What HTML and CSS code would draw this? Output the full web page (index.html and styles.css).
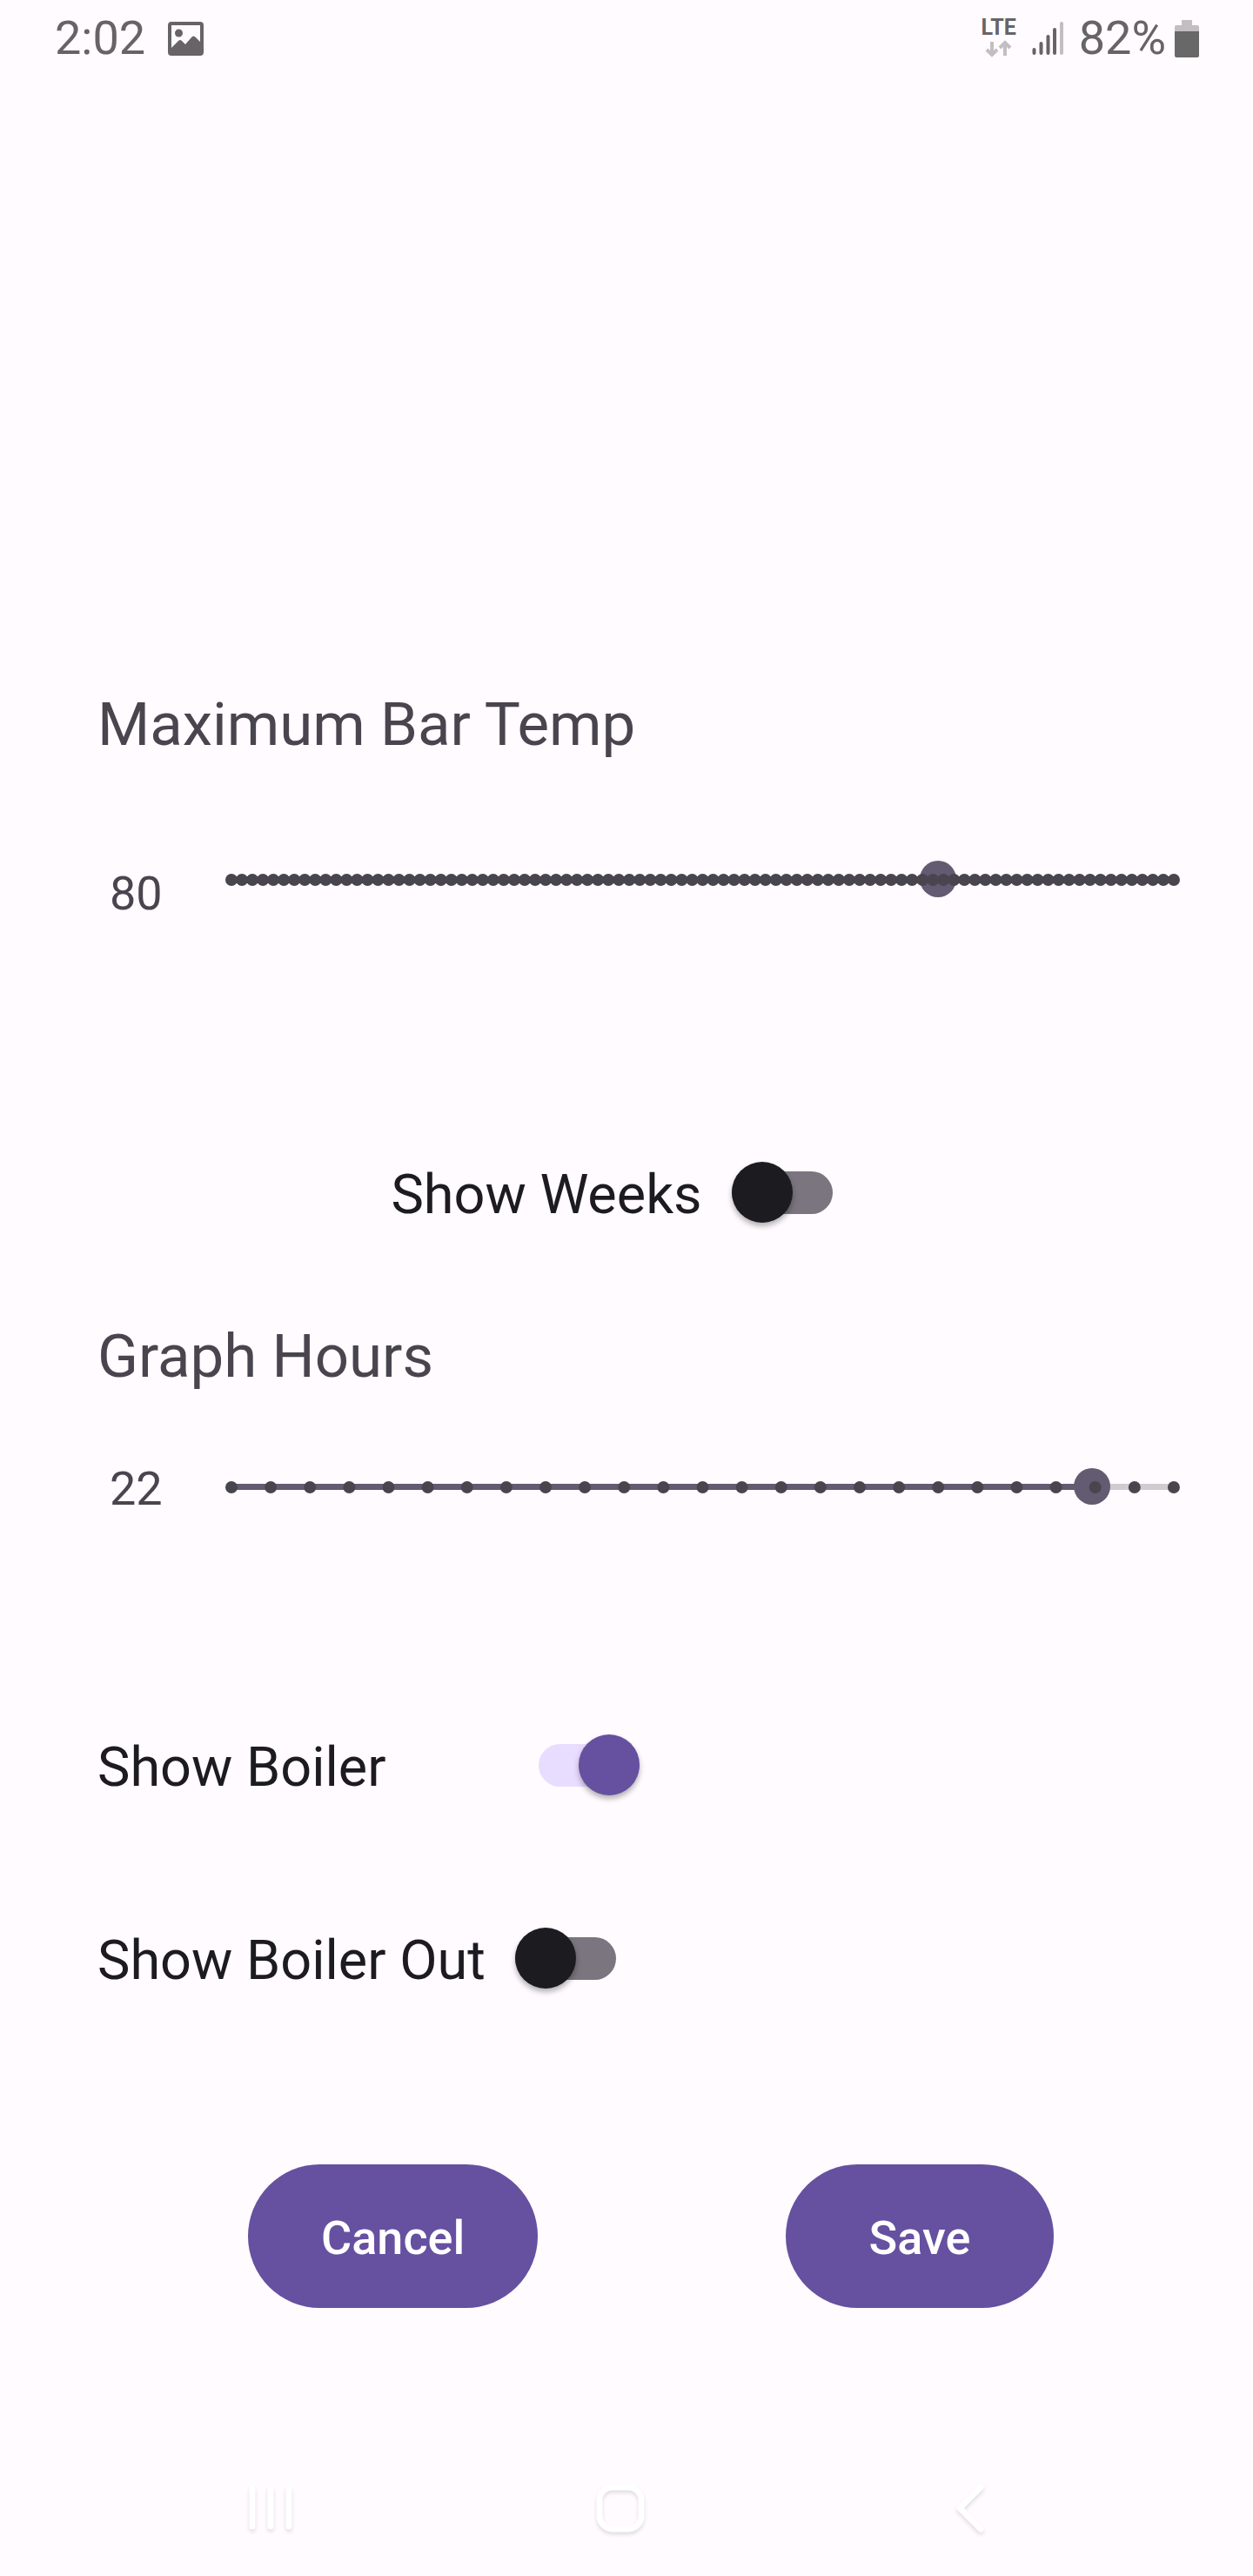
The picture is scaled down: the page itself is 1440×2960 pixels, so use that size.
FILE: index.html
```html
<!DOCTYPE html>
<html lang="en">
<head>
<meta charset="utf-8">
<meta name="viewport" content="width=device-width, initial-scale=1">
<title>Graph settings</title>
<link rel="stylesheet" href="styles.css">
</head>
<body>
<header class="status">
  <div class="status-group">
    <time class="clock">2:02</time>
    <svg class="picture-icon" viewBox="0 0 41 39" role="img" aria-label="Screenshot saved">
      <path fill-rule="evenodd" d="M4 0H37Q41 0 41 4V35Q41 39 37 39H4Q0 39 0 35V4Q0 0 4 0ZM4 4V30L12 22Q14 20 16 22L20 26L27 18Q29 15 32 18L37 23V4Z"/>
      <circle cx="12.500" cy="13" r="4.500"/>
    </svg>
  </div>
  <div class="status-group status-right">
    <div class="network">
      <span class="network-type">LTE</span>
      <svg class="network-arrows" viewBox="0 0 31 20" aria-hidden="true">
        <path d="M8 2V16M2 11L8 17L14 11M23 18V4M17 9L23 3L29 9"/>
      </svg>
    </div>
    <svg class="signal" viewBox="0 0 36 40" role="img" aria-label="Signal four of five">
      <path d="M2.500 33V37M10.500 26V37M18.500 18V37M26 10V37"/>
      <path class="faint" d="M34 3V37"/>
    </svg>
    <div class="power">
      <span class="clock">82%</span>
      <svg class="battery" viewBox="0 0 28 43" aria-hidden="true">
        <path class="battery-empty" d="M8 0H20V6H26Q28 6 28 8V13H0V8Q0 6 2 6H8Z"/>
        <path class="battery-full" d="M0 13H28V41Q28 43 26 43H2Q0 43 0 41Z"/>
      </svg>
    </div>
  </div>
</header>

<main class="settings">
  <section class="setting">
    <label class="title" for="max-temp">Maximum Bar Temp</label>
    <div class="slider-row">
      <output class="value value-low" for="max-temp">80</output>
      <div class="slider">
        <input class="range" id="max-temp" type="range" min="20" max="100" value="80">
        <svg class="ticks" aria-hidden="true"><line x1="0" y1="50%" x2="100%" y2="50%" pathLength="90.001" stroke-dasharray="0 1"/></svg>
      </div>
    </div>
  </section>

  <div class="switch-row switch-centered">
    <label class="switch-label" for="weeks">Show Weeks</label>
    <input class="switch" id="weeks" type="checkbox" role="switch">
  </div>

  <section class="setting">
    <label class="title" for="hours">Graph Hours</label>
    <div class="slider-row slider-row-near">
      <output class="value" for="hours">22</output>
      <div class="slider">
        <input class="range range-hours" id="hours" type="range" min="1" max="24" value="22">
        <svg class="ticks" aria-hidden="true"><line x1="0" y1="50%" x2="100%" y2="50%" pathLength="24.001" stroke-dasharray="0 1"/></svg>
      </div>
    </div>
  </section>

  <div class="switch-list">
    <div class="switch-row">
      <label class="switch-label switch-label-wide" for="boiler">Show Boiler</label>
      <input class="switch" id="boiler" type="checkbox" role="switch" checked>
    </div>
    <div class="switch-row">
      <label class="switch-label" for="boiler-out">Show Boiler Out</label>
      <input class="switch" id="boiler-out" type="checkbox" role="switch">
    </div>
  </div>

  <div class="actions">
    <button class="action" type="button">Cancel</button>
    <button class="action" type="button">Save</button>
  </div>
</main>

<nav class="nav" aria-label="System">
  <button class="nav-button" type="button" aria-label="Recent apps">
    <svg class="nav-icon" viewBox="0 0 64 64"><path d="M11 10V53M32 10V53M53 10V53"/></svg>
  </button>
  <button class="nav-button" type="button" aria-label="Home">
    <svg class="nav-icon" viewBox="0 0 64 64"><rect x="8" y="8" width="48" height="48" rx="15"/></svg>
  </button>
  <button class="nav-button" type="button" aria-label="Back">
    <svg class="nav-icon" viewBox="0 0 64 64"><path d="M44 8L20 32L44 56"/></svg>
  </button>
</nav>
</body>
</html>
```

FILE: styles.css
```css
* {
  box-sizing: border-box;
}

body {
  margin: 0;
  min-height: 100vh;
  display: flex;
  flex-direction: column;
  background: #fffbff;
  color: #1c1b1f;
  font-family: Roboto, "Liberation Sans", sans-serif;
}

/* Status bar */
.status {
  display: flex;
  justify-content: space-between;
  height: 88px;
  padding: 0 62px 0 63px;
  color: #666467;
}

.status-group {
  display: flex;
  align-items: center;
  gap: 26px;
}

.status-right {
  gap: 18px;
}

.power {
  display: flex;
  align-items: center;
  gap: 10px;
}

.clock {
  font-size: 54px;
  line-height: 88px;
}

.picture-icon {
  width: 41px;
  height: 39px;
  fill: currentColor;
}

.network {
  display: flex;
  flex-direction: column;
  align-items: center;
  gap: 4px;
}

.network-type {
  font-size: 25px;
  font-weight: 700;
  line-height: 20px;
}

.network-arrows {
  width: 31px;
  height: 20px;
  fill: none;
  stroke: #c1bfc1;
  stroke-width: 4;
}

.signal {
  width: 36px;
  height: 40px;
  fill: none;
  stroke: currentColor;
  stroke-width: 4;
  stroke-linecap: round;
}

.faint {
  stroke: #c1bfc1;
}

.battery {
  width: 28px;
  height: 43px;
}

.battery-empty {
  fill: #c1bfc1;
}

.battery-full {
  fill: #686868;
}

/* Settings */
.settings {
  display: flex;
  flex-direction: column;
  padding-top: 699px;
}

.setting {
  padding: 0 70px 0 112px;
  color: #49454f;
}

.title {
  display: block;
  font-size: 69px;
  line-height: 92px;
}

.slider-row {
  display: flex;
  align-items: flex-start;
  margin-top: 87px;
}

.slider-row-near {
  margin-top: 59px;
}

.value {
  flex: none;
  width: 133px;
  padding-left: 14px;
  font-size: 54px;
  line-height: 94px;
}

.value-low {
  line-height: 122px;
}

.slider {
  position: relative;
  flex: 1;
  height: 88px;
}

.range {
  appearance: none;
  display: block;
  width: 100%;
  height: 88px;
  margin: 0;
  background: linear-gradient(#625b71, #625b71) center / calc(100% - 42px) 7px no-repeat;
}

.range-hours {
  background: linear-gradient(90deg, #625b71 91%, #cfcbce 91%) center / calc(100% - 42px) 7px no-repeat;
}

.range::-webkit-slider-thumb {
  appearance: none;
  width: 42px;
  height: 42px;
  border-radius: 50%;
  background: #625b71;
}

/* Step marks lie over both the track and the thumb */
.ticks {
  position: absolute;
  top: 0;
  left: 21px;
  width: calc(100% - 42px);
  height: 90px;
  overflow: visible;
  pointer-events: none;
  stroke: #49454f;
  stroke-width: 14px;
  stroke-linecap: round;
}

/* Switches */
.switch-row {
  display: flex;
  align-items: center;
  gap: 34px;
}

.switch-centered {
  justify-content: center;
  margin: 231px 0 92px;
  padding-right: 34px;
}

.switch-list {
  display: flex;
  flex-direction: column;
  gap: 120px;
  padding: 0 112px;
  margin-top: 219px;
}

.switch-label {
  padding-top: 6px;
  font-size: 63px;
  line-height: 96px;
}

.switch-label-wide {
  min-width: 473px;
}

.switch {
  appearance: none;
  flex: none;
  display: flex;
  align-items: center;
  width: 116px;
  height: 49px;
  margin: 0;
  border-radius: 25px;
  background: #7a757f;
}

.switch::before {
  content: "";
  width: 70px;
  height: 70px;
  flex: none;
  border-radius: 50%;
  background: #1c1b1f;
  box-shadow: 0 4px 6px rgba(0, 0, 0, 0.3);
}

.switch:checked {
  justify-content: flex-end;
  background: #e9ddff;
}

.switch:checked::before {
  background: #6650a0;
}

/* Buttons */
.actions {
  display: flex;
  justify-content: space-between;
  margin-top: 186px;
  padding: 0 229px 0 285px;
}

.action {
  min-width: 308px;
  height: 165px;
  padding: 4px 84px 0;
  border: 0;
  border-radius: 83px;
  background: #6650a0;
  color: #fff;
  font: 500 54px/80px Roboto, "Liberation Sans", sans-serif;
}

/* System navigation */
.nav {
  display: flex;
  margin-top: auto;
  padding: 0 124px 46px 110px;
}

.nav-button {
  flex: 1;
  display: flex;
  justify-content: center;
  padding: 0;
  border: 0;
  background: none;
}

.nav-icon {
  width: 64px;
  height: 64px;
  overflow: visible;
  fill: none;
  stroke: #fff;
  stroke-width: 7;
  stroke-linecap: round;
  stroke-linejoin: round;
  filter: drop-shadow(0 3px 2px rgba(0, 0, 0, 0.12));
}
```
